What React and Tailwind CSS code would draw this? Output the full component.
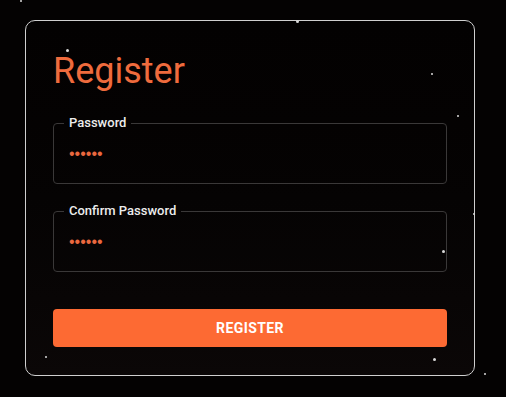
import React from "react";

const stars = [
  { x: 20, y: 0, s: 2 },
  { x: 296, y: 20, s: 3 },
  { x: 66, y: 49, s: 3 },
  { x: 431, y: 73, s: 2 },
  { x: 457, y: 115, s: 2 },
  { x: 473, y: 213, s: 2 },
  { x: 442, y: 250, s: 3 },
  { x: 45, y: 356, s: 2 },
  { x: 433, y: 358, s: 3 },
  { x: 484, y: 373, s: 2 },
];

function Field({ label }) {
  return (
    <fieldset className="border border-[#3a3838] rounded-[4px] pl-[15px] pr-[15px] m-0">
      <legend className="ml-[-5px] px-[5px] text-[13px] leading-[16px] font-medium text-[#ececec]">
        {label}
      </legend>
      <div className="pt-[13px] h-[52px] text-[16px] leading-[20px] text-[#ea683f] font-['Liberation_Sans',sans-serif]">
        ••••••
      </div>
    </fieldset>
  );
}

export default function App() {
  return (
    <div className="relative w-[506px] h-[397px] overflow-hidden bg-[#040202] font-['Roboto',sans-serif]">
      <div className="ml-[25px] mt-[20px] w-[450px] h-[356px] border border-[#cfcfcf] rounded-[10px] bg-linear-to-b from-[#030101] via-[#050303] to-[#0b0707] px-[27px] pt-[29px] flex flex-col">
        <h1 className="text-[36px] leading-[42px] font-normal text-[#ef6b3d] m-0">Register</h1>
        <div className="mt-[23px]">
          <Field label="Password" />
        </div>
        <div className="mt-[19px]">
          <Field label="Confirm Password" />
        </div>
        <button className="mt-[37px] h-[38px] w-full rounded-[4px] bg-[#fd6a33] text-white text-[14px] font-bold tracking-[0.4px] uppercase">
          Register
        </button>
      </div>
      {stars.map((st, i) => (
        <span
          key={i}
          className="absolute rounded-full bg-[#d8d8d8]"
          style={{ left: st.x, top: st.y, width: st.s, height: st.s }}
        />
      ))}
    </div>
  );
}
